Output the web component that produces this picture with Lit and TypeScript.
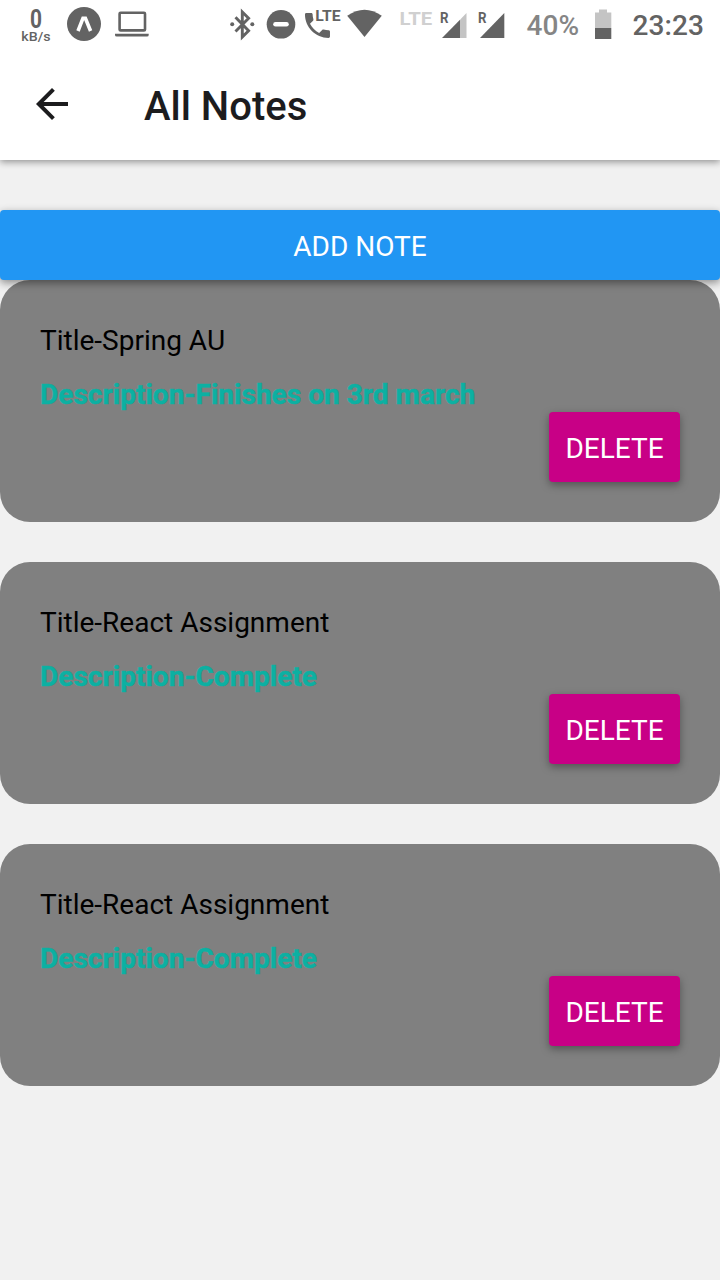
import { LitElement, html, css } from "lit";
import { customElement, property, state } from "lit/decorators.js";

interface Note {
  id: number;
  title: string;
  description: string;
}

@customElement("status-bar")
class StatusBar extends LitElement {
  static styles = css`
    :host {
      display: flex;
      height: 50px;
      background: #fff;
    }
    svg {
      display: block;
      flex: none;
      height: 50px;
      fill: #636363;
      font-family: Roboto, sans-serif;
    }
    .spacer {
      flex: 1;
    }
    .line {
      fill: none;
      stroke: #636363;
    }
    .white {
      fill: none;
      stroke: #fff;
    }
    .light {
      fill: #c4c4c4;
    }
    .faint {
      fill: #d0d0d0;
    }
    .bold {
      font-weight: 700;
    }
    .medium {
      font-weight: 500;
    }
    .percent {
      fill: #858585;
    }
  `;

  render() {
    return html`
      <svg width="60" viewBox="0 0 60 50">
        <text class="bold" x="30" y="27.5" font-size="25" textLength="12" lengthAdjust="spacingAndGlyphs">0</text>
        <text class="medium" x="21.3" y="40.5" font-size="13.5" textLength="29.2" lengthAdjust="spacingAndGlyphs">kB/s</text>
      </svg>
      <svg width="48" viewBox="60 0 48 50">
        <circle cx="84" cy="24" r="17" />
        <path class="white" d="M78 31 83 18.2h2.4l5.2 12.8" stroke-width="3.6" />
      </svg>
      <svg width="52" viewBox="108 0 52 50">
        <rect class="line" x="119.6" y="12.8" width="25.4" height="17.6" rx="1" stroke-width="2.6" />
        <path d="M115 33.7h33.7v1.2q0 1.7-1.7 1.7h-30.3q-1.7 0-1.7-1.7z" />
      </svg>
      <div class="spacer"></div>
      <svg width="35" viewBox="225 0 35 50">
        <path class="line" d="M235.5 17.2 248.6 30.8 242.3 37V12l6.3 6.2-13.1 13.3" stroke-width="2.9" />
        <circle cx="232.2" cy="24.3" r="2" />
        <circle cx="252.3" cy="24.3" r="2" />
      </svg>
      <svg width="40" viewBox="260 0 40 50">
        <circle cx="281" cy="24.3" r="14.3" />
        <path class="white" d="M275.5 24.3h11" stroke-width="4.6" stroke-linecap="round" />
      </svg>
      <svg width="45" viewBox="300 0 45 50">
        <path
          transform="translate(300.8 8.8) scale(1.389)"
          d="M6.62 10.79c1.44 2.83 3.76 5.14 6.59 6.59l2.2-2.2c.27-.27.67-.36 1.02-.24 1.12.37 2.33.57 3.57.57.55 0 1 .45 1 1V20c0 .55-.45 1-1 1-9.39 0-17-7.61-17-17 0-.55.45-1 1-1h3.5c.55 0 1 .45 1 1 0 1.25.2 2.45.57 3.57.11.35.03.74-.25 1.02l-2.2 2.2z"
        />
        <text class="bold" x="315.3" y="21.3" font-size="15.5" textLength="25.4" lengthAdjust="spacingAndGlyphs">LTE</text>
      </svg>
      <svg width="50" viewBox="345 0 50 50">
        <path d="M347.2 15.8Q364.5 3.8 381.8 15.8L364.5 37z" />
      </svg>
      <svg width="40" viewBox="395 0 40 50">
        <text class="bold faint" x="399.5" y="24.6" font-size="18.5" textLength="32.7" lengthAdjust="spacingAndGlyphs">LTE</text>
      </svg>
      <svg width="38" viewBox="435 0 38 50">
        <text class="bold" x="440" y="23.3" font-size="14" textLength="8.5" lengthAdjust="spacingAndGlyphs">R</text>
        <path d="M442 38 460 19.8V38z" />
        <path class="light" d="M460 19.8 466.5 13v25H460z" />
      </svg>
      <svg width="47" viewBox="473 0 47 50">
        <text class="bold" x="478" y="23.3" font-size="14" textLength="8.5" lengthAdjust="spacingAndGlyphs">R</text>
        <path d="M480 38 504.3 13v25z" />
      </svg>
      <svg width="68" viewBox="520 0 68 50">
        <text class="medium percent" x="526.5" y="34.8" font-size="28" textLength="52.5">40%</text>
      </svg>
      <svg width="37" viewBox="588 0 37 50">
        <path class="light" d="M595 12.5h4V9.5h8v3h4.3V28H595z" />
        <path d="M595 28h16.3v11H595z" />
      </svg>
      <svg width="95" viewBox="625 0 95 50">
        <text class="medium" x="632.5" y="34.8" font-size="28" textLength="71.5">23:23</text>
      </svg>
    `;
  }
}

@customElement("note-card")
class NoteCard extends LitElement {
  @property({ attribute: false }) note!: Note;

  static styles = css`
    :host {
      display: flex;
      flex-direction: column;
      box-sizing: border-box;
      height: 242px;
      padding: 40px;
      border-radius: 30px;
      background: #808080;
      font-size: 28px;
      line-height: 38px;
    }
    .title {
      flex: none;
      margin-top: 2px;
      color: #000;
    }
    .description {
      flex: none;
      height: 36px;
      margin-top: 16px;
      color: #0cb0a2;
      font-weight: 700;
      letter-spacing: 0.03px;
      -webkit-text-stroke: 0.5px #0cb0a2;
    }
    .delete {
      flex: none;
      align-self: flex-end;
      width: 131px;
      height: 70px;
      padding: 3px 0 0;
      border: 0;
      border-radius: 4px;
      background: #c80086;
      color: #fff;
      font: inherit;
      box-shadow: 0 3px 8px rgba(0, 0, 0, 0.36);
    }
  `;

  render() {
    return html`
      <div class="title">Title-${this.note.title}</div>
      <div class="description">Description-${this.note.description}</div>
      <button
        class="delete"
        @click=${() => this.dispatchEvent(new CustomEvent("delete-note", { detail: this.note.id }))}
      >DELETE</button>
    `;
  }
}

@customElement("app-root")
class AppRoot extends LitElement {
  @state() private notes: Note[] = [
    { id: 1, title: "Spring AU", description: "Finishes on 3rd march" },
    { id: 2, title: "React Assignment", description: "Complete" },
    { id: 3, title: "React Assignment", description: "Complete" },
  ];

  static styles = css`
    :host {
      display: flex;
      flex-direction: column;
      box-sizing: border-box;
      width: 720px;
      height: 1280px;
      overflow: hidden;
      background: #f1f1f1;
      font-family: Roboto, sans-serif;
    }
    .top {
      flex: none;
      height: 160px;
      background: #fff;
      box-shadow: 0 2px 7px rgba(0, 0, 0, 0.4);
    }
    .header {
      display: flex;
      align-items: center;
      gap: 68px;
      height: 108px;
      padding-left: 28px;
    }
    .back {
      flex: none;
      width: 48px;
      height: 48px;
      fill: #1c1c1e;
    }
    .heading {
      margin: 6px 0 0;
      color: #1c1c1e;
      font-size: 40px;
      font-weight: 500;
      line-height: 48px;
    }
    .add {
      z-index: 1;
      flex: none;
      height: 70px;
      margin-top: 50px;
      padding: 3px 0 0;
      border: 0;
      border-radius: 4px;
      background: #2196f3;
      color: #fff;
      font: 28px Roboto, sans-serif;
      box-shadow: 0 3px 8px rgba(0, 0, 0, 0.42);
    }
    .list {
      display: flex;
      flex-direction: column;
      gap: 40px;
    }
  `;

  private remove(id: number) {
    this.notes = this.notes.filter((note) => note.id !== id);
  }

  render() {
    return html`
      <div class="top">
        <status-bar></status-bar>
        <div class="header">
          <svg class="back" viewBox="0 0 24 24">
            <path d="M20 11H7.83l5.59-5.59L12 4l-8 8 8 8 1.41-1.41L7.83 13H20v-2z" />
          </svg>
          <h1 class="heading">All Notes</h1>
        </div>
      </div>
      <button class="add">ADD NOTE</button>
      <div class="list">
        ${this.notes.map(
          (note) => html`<note-card
            .note=${note}
            @delete-note=${(e: CustomEvent<number>) => this.remove(e.detail)}
          ></note-card>`
        )}
      </div>
    `;
  }
}
